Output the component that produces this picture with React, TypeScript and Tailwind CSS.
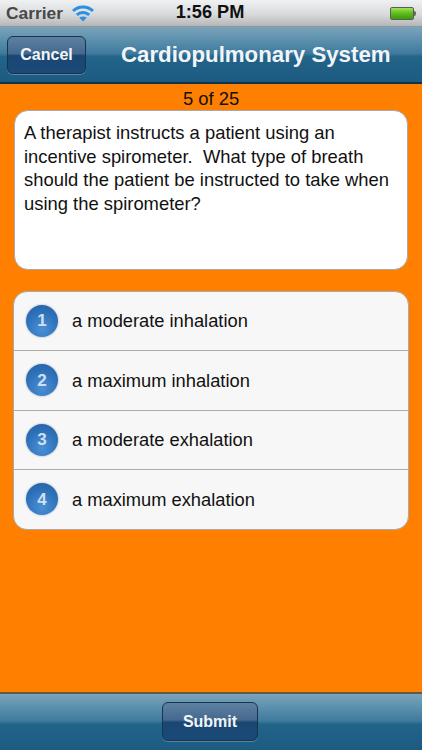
import React from 'react'

const options = ['a moderate inhalation', 'a maximum inhalation', 'a moderate exhalation', 'a maximum exhalation']

const barGradient =
  'bg-[linear-gradient(to_bottom,#7ba3bb_0%,#5a8fac_25%,#3f7a9e_48%,#236489_54%,#1c5a82_100%)]'
const buttonGradient =
  'bg-[linear-gradient(to_bottom,#5f80a0_0%,#44698e_46%,#1a4672_52%,#1b4a78_100%)]'

const Wifi = () => (
  <svg width="22" height="17" viewBox="0 0 22 17" fill="none" stroke="#2b8fe6" strokeWidth="3">
    <path d="M1 6C6.6 0.8 15.4 0.8 21 6" />
    <path d="M4.8 9.8C8.4 6.6 13.6 6.6 17.2 9.8" />
    <path d="M11 16.5L7.2 12.6C9.4 11 12.6 11 14.8 12.6Z" fill="#2b8fe6" stroke="none" />
  </svg>
)

const Battery = () => (
  <div className="flex items-center">
    <div className="h-[13px] w-[24px] rounded-[2px] border border-[#5c5c5c] bg-[linear-gradient(to_bottom,#a6e05c_0%,#5fc01c_45%,#3c9a0c_100%)]" />
    <div className="h-[5px] w-[2px] rounded-r-sm bg-[#666]" />
  </div>
)

const StatusBar = () => (
  <div className="flex h-[27px] items-center justify-between border-b border-[#8f969c] bg-[linear-gradient(to_bottom,#f0f1f2_0%,#d9dadb_55%,#b5b6b7_100%)] pl-[6px] pr-[6px]">
    <div className="flex w-[120px] items-center gap-[9px] text-[17.4px] font-bold text-[#484848]">
      <span>Carrier</span>
      <Wifi />
    </div>
    <div className="mr-[2px] text-[18.2px] font-bold text-[#111]">1:56 PM</div>
    <div className="flex w-[120px] justify-end">
      <Battery />
    </div>
  </div>
)

const BarButton = ({ label, className }: { label: string; className: string }) => (
  <div
    className={`flex items-center justify-center rounded-[6px] border border-[#17344f] text-[16px] font-bold text-[#f2f5f8] shadow-[0_1px_0_rgba(255,255,255,0.25)] ${buttonGradient} ${className}`}
  >
    {label}
  </div>
)

const App = () => (
  <div className="flex h-[750px] w-[422px] flex-col overflow-hidden bg-[#ff8000] font-['Liberation_Sans',Arial,sans-serif]">
    <StatusBar />
    <div className={`flex h-[57px] items-center gap-[35px] border-b-2 border-[#10324a] pl-[7px] ${barGradient}`}>
      <BarButton label="Cancel" className="h-[38px] w-[79px]" />
      <div className="text-[22.25px] font-bold whitespace-nowrap text-[#f1f5f8]">Cardiopulmonary System</div>
    </div>

    <div className="flex flex-1 flex-col px-[13px]">
      <div className="flex h-[26px] items-center justify-center pt-[3px] text-[18.4px] text-[#111]">5 of 25</div>
      <div className="mx-px h-[160px] rounded-[14px] border border-[#a9a9a9] bg-white pl-[9px] pr-[6px] pt-[10px] text-[18.4px] leading-[23.7px] text-[#111]">
        A therapist instructs a patient using an incentive spirometer.&nbsp; What type of breath should the patient be instructed to take when using the spirometer?
      </div>
      <div className="mt-[21px] overflow-hidden rounded-[14px] border border-[#a9a9a9] bg-[#f7f7f7]">
        {options.map((text, i) => (
          <div
            key={text}
            className="flex h-[59.25px] items-center gap-[14px] border-b border-[#acacac] pl-[12px] text-[18.3px] text-[#111] last:border-b-0"
          >
            <div className="flex h-[32px] w-[32px] items-center justify-center rounded-full bg-[radial-gradient(circle_at_50%_75%,#4a90d6_0%,#2f72ba_55%,#215fa3_100%)] text-[17px] font-bold text-[#cfe0f2] shadow-[0_0_2px_rgba(60,90,130,0.6)]">
              {i + 1}
            </div>
            <span>{text}</span>
          </div>
        ))}
      </div>
    </div>

    <div className={`flex h-[58px] items-start justify-center border-t-2 border-[#5f5a4a] pr-[2px] pt-[8px] ${barGradient}`}>
      <BarButton label="Submit" className="h-[39px] w-[96px]" />
    </div>
  </div>
)

export default App
